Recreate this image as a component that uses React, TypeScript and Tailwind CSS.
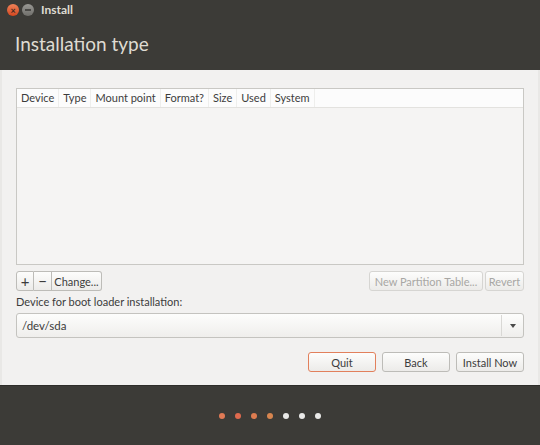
const font = { fontFamily: 'Lato, "Open Sans", sans-serif' }

const columns = ['Device', 'Type', 'Mount point', 'Format?', 'Size', 'Used', 'System']

function Btn({ children, disabled, accent, className = '' }: { children: React.ReactNode; disabled?: boolean; accent?: boolean; className?: string }) {
  return (
    <button
      className={`h-[20px] whitespace-nowrap rounded-[3px] border bg-gradient-to-b from-[#fdfdfc] to-[#ecebe9] text-[11px] leading-none ${
        disabled ? 'border-[#d6d5d2] text-[#a8a7a4]' : accent ? 'border-[#e2805c] text-[#3c3c3c]' : 'border-[#bdbcb8] text-[#3c3c3c]'
      } ${className}`}
    >
      {children}
    </button>
  )
}

export default function App() {
  return (
    <div className="w-[540px] h-[445px] flex flex-col bg-[#3c3b37] overflow-hidden" style={font}>
      {/* Title bar */}
      <div className="h-[20px] flex items-center pl-[7px]">
        <div className="w-[12px] h-[12px] rounded-full bg-gradient-to-b from-[#f08157] to-[#d3461e] flex items-center justify-center text-[#3c2a20] text-[9px] leading-none font-bold">
          ×
        </div>
        <div className="ml-[3px] w-[12px] h-[12px] rounded-full bg-gradient-to-b from-[#9a9995] to-[#6f6e6a] flex items-center justify-center">
          <div className="w-[6px] h-[2px] bg-[#4a4946]" />
        </div>
        <span className="ml-[7px] text-[12px] font-bold text-[#dfdbd2]">Install</span>
      </div>

      {/* Header */}
      <div className="h-[50px] flex items-center pl-[15px]">
        <span className="text-[19px] text-[#dfdbd2] leading-none -mt-[4px]">Installation type</span>
      </div>

      {/* Body */}
      <div className="flex-1 bg-[#f2f1f0] border-l-2 border-r-2 border-[#e9e8e6] flex flex-col px-[14px] pt-[18px]">
        <div className="h-[177px] bg-[#fcfcfc] border border-[#c9c8c4] flex flex-col">
          <div className="h-[19px] flex items-center border-b border-[#e3e2df] text-[11px] text-[#3c3c3c]">
            {columns.map((c) => (
              <div key={c} className="px-[4px] h-full flex items-center border-r border-[#eeeeec]">
                {c}
              </div>
            ))}
          </div>
          <div className="flex-1 bg-[#f5f4f3]" />
        </div>

        <div className="mt-[6px] flex items-center">
          <Btn className="w-[18px] rounded-r-none text-[15px]">+</Btn>
          <Btn className="w-[18px] rounded-none border-l-0 text-[15px]">−</Btn>
          <Btn className="w-[50px] rounded-l-none border-l-0">Change...</Btn>
          <div className="flex-1" />
          <Btn disabled className="w-[114px]">New Partition Table...</Btn>
          <Btn disabled className="ml-[2px] w-[39px]">Revert</Btn>
        </div>

        <div className="mt-[4px] text-[11px] leading-[14px] text-[#3c3c3c]">Device for boot loader installation:</div>

        <div className="mt-[4px] h-[25px] rounded-[3px] border border-[#c4c3bf] bg-gradient-to-b from-[#fdfdfc] to-[#efeeec] flex items-center">
          <span className="flex-1 pl-[5px] text-[11.5px] text-[#3c3c3c]">/dev/sda</span>
          <div className="w-[22px] h-[21px] border-l border-[#d9d8d5] flex items-center justify-center">
            <div className="w-0 h-0 border-l-[3.5px] border-r-[3.5px] border-t-[4px] border-l-transparent border-r-transparent border-t-[#4a4a4a]" />
          </div>
        </div>

        <div className="mt-[14px] flex justify-end gap-[6px]">
          <Btn accent className="w-[68px]">Quit</Btn>
          <Btn className="w-[68px]">Back</Btn>
          <Btn className="w-[68px]">Install Now</Btn>
        </div>
      </div>

      {/* Footer */}
      <div className="h-[60px] flex items-center justify-center gap-[10px] border-t border-[#2e2d2a]">
        {['#e07a55', '#df6a4e', '#dd7c50', '#d7854f', '#e9e9e7', '#e9e9e7', '#e9e9e7'].map((c, i) => (
          <div key={i} className="w-[6px] h-[6px] rounded-full" style={{ backgroundColor: c }} />
        ))}
      </div>
    </div>
  )
}
